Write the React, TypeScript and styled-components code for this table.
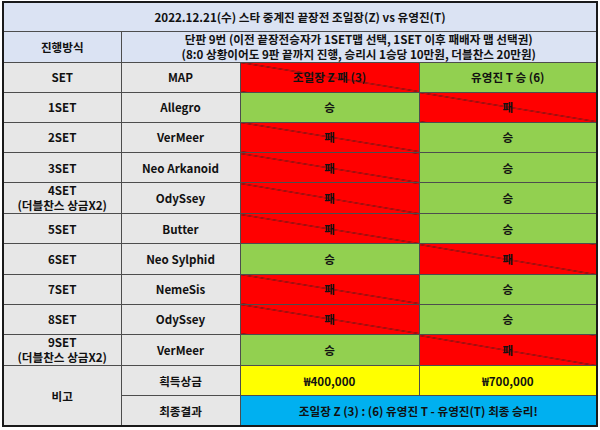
import React from "react";
import styled, { createGlobalStyle } from "styled-components";

const Global = createGlobalStyle`
  html, body { margin: 0; padding: 0; background: #ffffff; }
  body { font-family: "Noto Sans CJK KR", "Noto Sans", sans-serif; }
`;

const Page = styled.div`
  padding: 1px 0 0 2px;
`;

const Table = styled.table`
  border-collapse: collapse;
  table-layout: fixed;
  width: 596px;
  border: 2px solid #1a1a1a;
  font-family: "Noto Sans CJK KR", "Noto Sans", sans-serif;
  font-weight: 700;
  font-size: 11.6px;
  color: #111;
`;

type Tone = "title" | "gray" | "win" | "lose" | "yellow" | "blue";

const bg: Record<Tone, string> = {
  title: "#dbe3f3",
  gray: "#e7e7e7",
  win: "#92d050",
  lose: "#ff0000",
  yellow: "#ffff00",
  blue: "#00b0f0",
};

const Cell = styled.td<{ $tone: Tone; $h?: number }>`
  border: 1px solid #4d4d4d;
  background-color: ${(p) => bg[p.$tone]};
  background-image: ${(p) =>
    p.$tone === "lose"
      ? "linear-gradient(to top right, transparent calc(50% - 0.6px), #222 50%, transparent calc(50% + 0.6px))"
      : "none"};
  text-align: center;
  vertical-align: middle;
  height: ${(p) => p.$h ?? 29.2}px;
  padding: 0;
  line-height: 14px;
  white-space: nowrap;
`;

const Line = styled.div`
  line-height: 15px;
`;

type Result = "승" | "패";

const sets: { set: string; sub?: string; map: string; z: Result; t: Result }[] = [
  { set: "1SET", map: "Allegro", z: "승", t: "패" },
  { set: "2SET", map: "VerMeer", z: "패", t: "승" },
  { set: "3SET", map: "Neo Arkanoid", z: "패", t: "승" },
  { set: "4SET", sub: "(더블찬스 상금X2)", map: "OdySsey", z: "패", t: "승" },
  { set: "5SET", map: "Butter", z: "패", t: "승" },
  { set: "6SET", map: "Neo Sylphid", z: "승", t: "패" },
  { set: "7SET", map: "NemeSis", z: "패", t: "승" },
  { set: "8SET", map: "OdySsey", z: "패", t: "승" },
  { set: "9SET", sub: "(더블찬스 상금X2)", map: "VerMeer", z: "승", t: "패" },
];

const tone = (r: Result): Tone => (r === "승" ? "win" : "lose");

export default function App() {
  return (
    <Page>
      <Global />
      <Table>
        <colgroup>
          <col style={{ width: 118 }} />
          <col style={{ width: 119 }} />
          <col style={{ width: 179 }} />
          <col style={{ width: 178 }} />
        </colgroup>
        <tbody>
          <tr>
            <Cell $tone="title" colSpan={4} $h={27.5}>
              2022.12.21(수) 스타 중계진 끝장전 조일장(Z) vs 유영진(T)
            </Cell>
          </tr>
          <tr>
            <Cell $tone="title" $h={30}>진행방식</Cell>
            <Cell $tone="title" colSpan={3} $h={30}>
              <Line>단판 9번 (이전 끝장전승자가 1SET맵 선택, 1SET 이후 패배자 맵 선택권)</Line>
              <Line>(8:0 상황이어도 9판 끝까지 진행, 승리시 1승당 10만원, 더블찬스 20만원)</Line>
            </Cell>
          </tr>
          <tr>
            <Cell $tone="gray">SET</Cell>
            <Cell $tone="gray">MAP</Cell>
            <Cell $tone="lose">조일장 Z 패 (3)</Cell>
            <Cell $tone="win">유영진 T 승 (6)</Cell>
          </tr>
          {sets.map((s) => (
            <tr key={s.set}>
              <Cell $tone="gray">
                {s.sub ? (
                  <>
                    <Line>{s.set}</Line>
                    <Line>{s.sub}</Line>
                  </>
                ) : (
                  s.set
                )}
              </Cell>
              <Cell $tone="gray">{s.map}</Cell>
              <Cell $tone={tone(s.z)}>{s.z}</Cell>
              <Cell $tone={tone(s.t)}>{s.t}</Cell>
            </tr>
          ))}
          <tr>
            <Cell $tone="gray" rowSpan={2}>비고</Cell>
            <Cell $tone="gray">획득상금</Cell>
            <Cell $tone="yellow">₩400,000</Cell>
            <Cell $tone="yellow">₩700,000</Cell>
          </tr>
          <tr>
            <Cell $tone="gray">최종결과</Cell>
            <Cell $tone="blue" colSpan={2}>
              조일장 Z (3) : (6) 유영진 T - 유영진(T) 최종 승리!
            </Cell>
          </tr>
        </tbody>
      </Table>
    </Page>
  );
}
